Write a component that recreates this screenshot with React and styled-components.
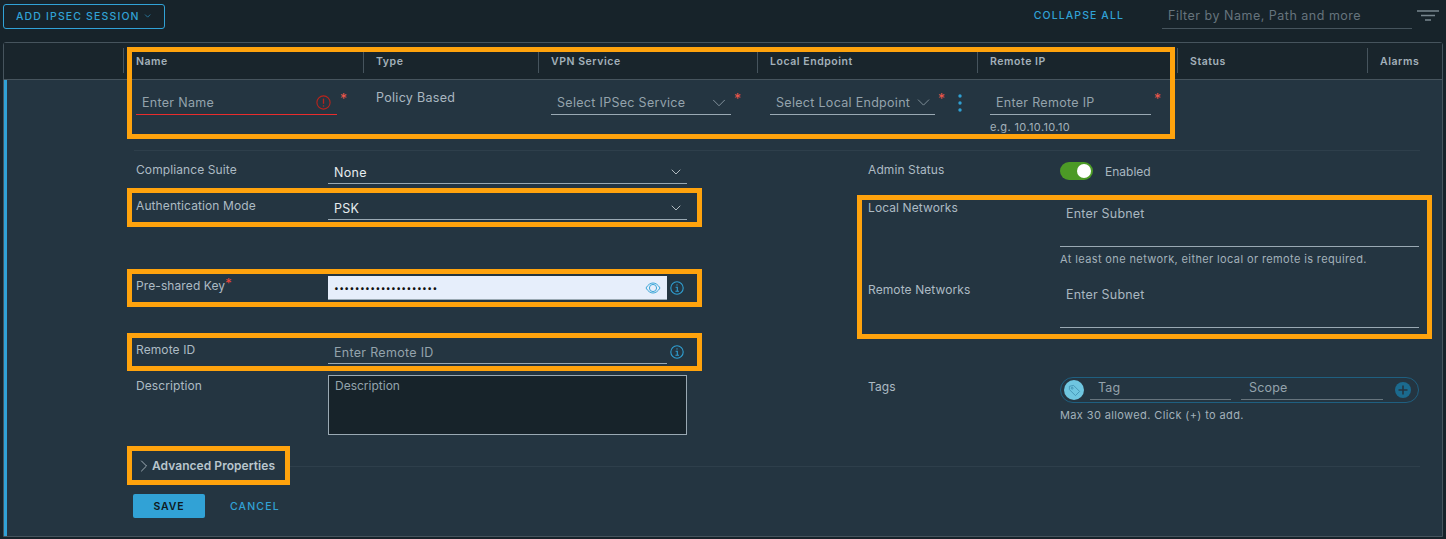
import React from 'react';
import styled, { createGlobalStyle } from 'styled-components';
import { ChevronDown, ChevronRight } from 'lucide-react';

const GlobalStyle = createGlobalStyle`
  html, body { margin: 0; padding: 0; background: #17232a; }
  * { box-sizing: border-box; }
  body { font-family: Inter, "Open Sans", sans-serif; width: 1446px; height: 539px; overflow: hidden; }
`

const Page = styled.div`
  position: relative;
  width: 1446px;
  height: 539px;
  padding: 0 3px;
  overflow: hidden;
  color: #adbbc4;
  font-size: 12.5px;
`
const Toolbar = styled.div`
  display: flex;
  align-items: center;
  height: 42px;
  padding-bottom: 10px;
`
const AddButton = styled.button`
  display: flex;
  align-items: center;
  gap: 3px;
  height: 25px;
  width: 162px;
  padding: 0 12px;
  background: transparent;
  border: 1px solid #31a2d6;
  border-radius: 3px;
  color: #31a2d6;
  font: 500 10.5px Inter, sans-serif;
  letter-spacing: 1.15px;
  white-space: nowrap;
`
const CollapseAll = styled.span`
  margin-left: auto;
  padding-bottom: 2px;
  color: #31a2d6;
  font-size: 10.5px;
  font-weight: 500;
  letter-spacing: 1.1px;
`
const FilterBox = styled.div`
  width: 250px;
  height: 24px;
  margin: 2px 0 0 38px;
  padding: 2px 0 0 6px;
  border-bottom: 1px solid #46545d;
  color: #66747d;
  font-size: 12.5px;
  line-height: 18px;
  letter-spacing: 0.5px;
`
const FilterIcon = styled.svg`
  margin: 0 3px 0 4px;
  width: 24px;
  height: 14px;
`
const Table = styled.div`
  height: 495px;
  background: #243541;
  border: 1px solid #46545d;
  border-radius: 3px 3px 0 0;
`
const columns = '119px 240px 175px 219px 220px 200px 190px 1fr';
const HeaderRow = styled.div`
  display: grid;
  grid-template-columns: ${columns};
  align-items: center;
  height: 37px;
  padding-bottom: 1px;
  background: #19252c;
  border-bottom: 1px solid #46545d;
`
const HeaderCell = styled.div`
  height: 25px;
  padding-left: 12px;
  line-height: 27px;
  font-size: 10.5px;
  font-weight: 600;
  color: #a3b1ba;
  letter-spacing: 0.55px;
  border-left: ${p => (p.$first ? 'none' : '1px solid #46545d')};
`
const Body = styled.div`
  height: 456px;
  border-left: 3px solid #31a2d6;
`
const SessionRow = styled.div`
  display: grid;
  grid-template-columns: 229px 175px 219px 220px 200px;
  height: 71px;
  margin: 0 22px 0 127px;
  border-bottom: 1px solid #2e3f4b;
`
const Cell = styled.div`
  display: flex;
  align-items: flex-start;
  padding: 11px 0 0 ${p => p.$pl ?? 13}px;
`
const FieldStack = styled.div`
  display: flex;
  flex-direction: column;
`
const LineField = styled.div`
  display: flex;
  align-items: center;
  justify-content: space-between;
  width: ${p => p.$w}px;
  height: 24px;
  padding: 0 ${p => p.$pr ?? 0}px 0 6px;
  border-bottom: 1px solid ${p => (p.$error ? '#e92c2c' : '#9aa9b3')};
  color: ${p => (p.$value ? '#e6ecef' : '#94a3ac')};
  font-size: 12.5px;
  white-space: nowrap;
  letter-spacing: 0.3px;
`
const Star = styled.span`
  margin: 1px 0 0 3px;
  color: #f0574a;
  font-size: 14px;
  line-height: 14px;
  width: 8px;
`
const PlainValue = styled.div`
  line-height: 14px;
  font-size: 12.5px;
  color: #a9b7c0;
  letter-spacing: 0.3px;
`
const Dots = styled.svg`
  width: 6px;
  height: 18px;
  margin: 3px 0 0 11px;
`
const Hint = styled.div`
  margin-top: ${p => p.$mt ?? 6}px;
  font-size: 11px;
  line-height: 13px;
  color: #a3b1ba;
  letter-spacing: 0.38px;
  white-space: nowrap;
`
const Form = styled.div`
  display: grid;
  grid-template-columns: 732px 552px;
  padding: 8px 0 0 129px;
  height: 305px;
`
const Column = styled.div`
  display: flex;
  flex-direction: column;
`
const Row = styled.div`
  display: grid;
  grid-template-columns: 192px 1fr;
  margin-top: ${p => p.$mt ?? 0}px;
  height: ${p => p.$h}px;
`
const Label = styled.div`
  padding-top: 1px;
  line-height: 20px;
  font-size: 12px;
  color: #adbbc4;
  letter-spacing: 0.1px;
  white-space: nowrap;
`
const LabelStar = styled.span`
  position: relative;
  top: -2px;
  color: #f0453c;
  font-size: 13px;
  line-height: 0;
`
const FormField = styled(LineField)`
  height: 25px;
  padding-top: 2px;
`
const SelectBox = styled(FormField)`
  width: 359px;
  padding-right: 3px;
`
const IconSlot = styled.div`
  display: flex;
  align-items: center;
  gap: 3px;
`
const KeyInput = styled.div`
  display: flex;
  align-items: center;
  justify-content: space-between;
  width: 339px;
  height: 24px;
  margin-top: 1px;
  padding: 0 6px;
  background: #e6eefb;
  border-bottom: 1px solid #9aa9b3;
  color: #111;
  font-size: 8.5px;
  letter-spacing: 0.4px;
`
const TextBox = styled.div`
  width: 359px;
  height: 60px;
  padding: 2px 6px;
  background: #17232a;
  border: 1px solid #9aa9b3;
  color: #94a3ac;
  font-size: 12px;
  line-height: 16px;
`
const SwitchRow = styled.div`
  display: flex;
  align-items: center;
  gap: 12px;
  height: 24px;
`
const SwitchTrack = styled.div`
  position: relative;
  width: 33px;
  height: 18px;
  background: #4c9a26;
  border-radius: 9px;
`
const SwitchKnob = styled.div`
  position: absolute;
  top: 2px;
  right: 2px;
  width: 14px;
  height: 14px;
  background: #fff;
  border-radius: 50%;
`
const SwitchText = styled.span`
  font-size: 12px;
  color: #a9b7c0;
`
const SubnetField = styled.div`
  height: 43px;
  width: 359px;
  padding: 0 6px;
  line-height: 20px;
  margin-top: ${p => p.$mt}px;
  border-bottom: 1px solid #9aa9b3;
  color: #a9b7c0;
  font-size: 12.5px;
  letter-spacing: 0.2px;
`
const TagBox = styled.div`
  display: flex;
  align-items: center;
  width: 359px;
  height: 26px;
  margin-top: 1px;
  padding: 0 7px 0 3px;
  border: 1px solid #1f5f80;
  border-radius: 13px;
`
const TagBadge = styled.div`
  display: flex;
  align-items: center;
  justify-content: center;
  flex: none;
  width: 20px;
  height: 20px;
  background: #6fc6e0;
  border-radius: 50%;
`
const TagInput = styled.div`
  width: ${p => p.$w}px;
  height: 20px;
  margin: 0 10px 0 ${p => p.$ml}px;
  padding-left: 8px;
  border-bottom: 1px solid #66747d;
  color: #94a3ac;
  font-size: 12.5px;
  line-height: 15px;
  letter-spacing: 0.2px;
`
const PlusSvg = styled.svg`
  margin-left: auto;
  width: 16px;
  height: 16px;
`
const AdvancedRow = styled.div`
  display: flex;
  align-items: center;
  height: 20px;
  margin-right: 22px;
  padding-left: 127px;
  color: #b9c6ce;
  font-size: 12px;
  font-weight: 600;
`
const AdvancedText = styled.span`
  margin-left: -2px;
  padding-bottom: 2px;
  letter-spacing: 0.05px;
`
const Rule = styled.div`
  flex: 1;
  height: 1px;
  margin-left: 15px;
  background: #2e3f4b;
`
const Actions = styled.div`
  display: flex;
  align-items: center;
  height: 24px;
  margin-top: 18px;
  padding-left: 126px;
`
const SaveButton = styled.button`
  width: 72px;
  height: 24px;
  background: #31a2d6;
  border: none;
  border-radius: 2px;
  color: #0f1a20;
  font: 600 10.5px Inter, sans-serif;
  letter-spacing: 0.9px;
`
const CancelButton = styled.button`
  margin-left: 13px;
  padding: 0 12px;
  background: transparent;
  border: none;
  color: #31a2d6;
  font: 500 10.5px Inter, sans-serif;
  letter-spacing: 1.15px;
`
const Highlight = styled.div`
  position: absolute;
  left: ${p => p.$x}px;
  top: ${p => p.$y}px;
  width: ${p => p.$w}px;
  height: ${p => p.$h}px;
  border: 5px solid #ffa30d;
  pointer-events: none;
`

const InfoIcon = () => (
  <svg width="14" height="14" viewBox="0 0 14 14" fill="none" stroke="#2f9fd2" strokeWidth="1.1">
    <circle cx="7" cy="7" r="6.2" />
    <path d="M5.6 6.2H7.3V10.2M5.4 10.3H9" />
    <circle cx="7" cy="3.9" r="0.7" fill="#2f9fd2" stroke="none" />
  </svg>
)
const ErrorIcon = () => (
  <svg width="15" height="15" viewBox="0 0 15 15" fill="none" stroke="#b8241c" strokeWidth="1.1">
    <circle cx="7.5" cy="7.5" r="6.6" />
    <path d="M7.5 3.6V8.8" strokeWidth="1.3" />
    <circle cx="7.5" cy="11" r="0.8" fill="#b8241c" stroke="none" />
  </svg>
)
const EyeIcon = () => (
  <svg width="16" height="12" viewBox="0 0 16 12" fill="none" stroke="#3ba6d8" strokeWidth="1">
    <path d="M1 6C3 2.6 5.4 1 8 1s5 1.6 7 5c-2 3.4-4.4 5-7 5S3 9.4 1 6Z" />
    <circle cx="8" cy="6" r="3.6" />
  </svg>
)
const TagIcon = () => (
  <svg width="13" height="13" viewBox="0 0 14 14" fill="none" stroke="#3f8fb0" strokeWidth="0.9">
    <path d="M1.5 2.5 6 1.5l6.5 6.5-4.5 4.5L1.5 6Z" />
    <circle cx="4.5" cy="4.5" r="1" />
  </svg>
)
const PlusIcon = () => (
  <PlusSvg viewBox="0 0 16 16">
    <circle cx="8" cy="8" r="8" fill="#1b6a8e" />
    <path d="M8 3.5V12.5M3.5 8H12.5" stroke="#243541" strokeWidth="1.6" />
  </PlusSvg>
)

const headers = ['', 'Name', 'Type', 'VPN Service', 'Local Endpoint', 'Remote IP', 'Status', 'Alarms'];

function App() {
  return (
    <Page>
      <GlobalStyle />
      <Toolbar>
        <AddButton>ADD IPSEC SESSION <ChevronDown size={14} strokeWidth={1.6} /></AddButton>
        <CollapseAll>COLLAPSE ALL</CollapseAll>
        <FilterBox>Filter by Name, Path and more</FilterBox>
        <FilterIcon viewBox="0 0 24 14" fill="none" stroke="#78868f" strokeWidth="1.3">
          <path d="M1 2H23M5 6.5H19M9 11H15" />
        </FilterIcon>
      </Toolbar>
      <Table>
        <HeaderRow>
          {headers.map((h, i) => <HeaderCell key={h} $first={i === 0}>{h}</HeaderCell>)}
        </HeaderRow>
        <Body>
          <SessionRow>
            <Cell $pl={2}>
              <LineField $w={201} $pr={6} $error>Enter Name <ErrorIcon /></LineField>
              <Star>*</Star>
            </Cell>
            <Cell>
              <PlainValue>Policy Based</PlainValue>
            </Cell>
            <Cell>
              <LineField $w={180} $pr={1}>Select IPSec Service <ChevronDown size={22} strokeWidth={0.9} /></LineField>
              <Star>*</Star>
            </Cell>
            <Cell>
              <LineField $w={165} $pr={1}>Select Local Endpoint <ChevronDown size={21} strokeWidth={0.9} /></LineField>
              <Star>*</Star>
              <Dots viewBox="0 0 6 18" fill="#2f9fd2">
                <circle cx="3" cy="2" r="1.7" />
                <circle cx="3" cy="9" r="1.7" />
                <circle cx="3" cy="16" r="1.7" />
              </Dots>
            </Cell>
            <Cell>
              <FieldStack>
                <LineField $w={161}>Enter Remote IP</LineField>
                <Hint>e.g. 10.10.10.10</Hint>
              </FieldStack>
              <Star>*</Star>
            </Cell>
          </SessionRow>
          <Form>
            <Column>
              <Row $h={24}>
                <Label>Compliance Suite</Label>
                <SelectBox $value>None <ChevronDown size={16} strokeWidth={1.1} /></SelectBox>
              </Row>
              <Row $h={24} $mt={12}>
                <Label>Authentication Mode</Label>
                <SelectBox $value>PSK <ChevronDown size={16} strokeWidth={1.1} /></SelectBox>
              </Row>
              <Row $h={25} $mt={56}>
                <Label>Pre-shared Key<LabelStar>*</LabelStar></Label>
                <IconSlot>
                  <KeyInput>••••••••••••••••••••<EyeIcon /></KeyInput>
                  <InfoIcon />
                </IconSlot>
              </Row>
              <Row $h={24} $mt={39}>
                <Label>Remote ID</Label>
                <IconSlot>
                  <FormField $w={339}>Enter Remote ID</FormField>
                  <InfoIcon />
                </IconSlot>
              </Row>
              <Row $h={60} $mt={12}>
                <Label>Description</Label>
                <TextBox>Description</TextBox>
              </Row>
            </Column>
            <Column>
              <Row $h={24}>
                <Label>Admin Status</Label>
                <SwitchRow>
                  <SwitchTrack><SwitchKnob /></SwitchTrack>
                  <SwitchText>Enabled</SwitchText>
                </SwitchRow>
              </Row>
              <Row $h={68} $mt={14}>
                <Label>Local Networks</Label>
                <div>
                  <SubnetField $mt={7}>Enter Subnet</SubnetField>
                  <Hint $mt={6}>At least one network, either local or remote is required.</Hint>
                </div>
              </Row>
              <Row $h={49} $mt={14}>
                <Label>Remote Networks</Label>
                <SubnetField $mt={6}>Enter Subnet</SubnetField>
              </Row>
              <Row $h={50} $mt={48}>
                <Label>Tags</Label>
                <div>
                  <TagBox>
                    <TagBadge><TagIcon /></TagBadge>
                    <TagInput $w={141} $ml={6}>Tag</TagInput>
                    <TagInput $w={142} $ml={0}>Scope</TagInput>
                    <PlusIcon />
                  </TagBox>
                  <Hint $mt={6}>Max 30 allowed. Click (+) to add.</Hint>
                </div>
              </Row>
            </Column>
          </Form>
          <AdvancedRow>
            <ChevronRight size={20} strokeWidth={1} />
            <AdvancedText>Advanced Properties</AdvancedText>
            <Rule />
          </AdvancedRow>
          <Actions>
            <SaveButton>SAVE</SaveButton>
            <CancelButton>CANCEL</CancelButton>
          </Actions>
        </Body>
      </Table>
      <Highlight $x={127} $y={47} $w={1048} $h={92} />
      <Highlight $x={127} $y={188} $w={575} $h={39} />
      <Highlight $x={127} $y={269} $w={575} $h={38} />
      <Highlight $x={127} $y={333} $w={575} $h={38} />
      <Highlight $x={127} $y={446} $w={163} $h={39} />
      <Highlight $x={857} $y={195} $w={575} $h={144} />
    </Page>
  );
}

export default App
